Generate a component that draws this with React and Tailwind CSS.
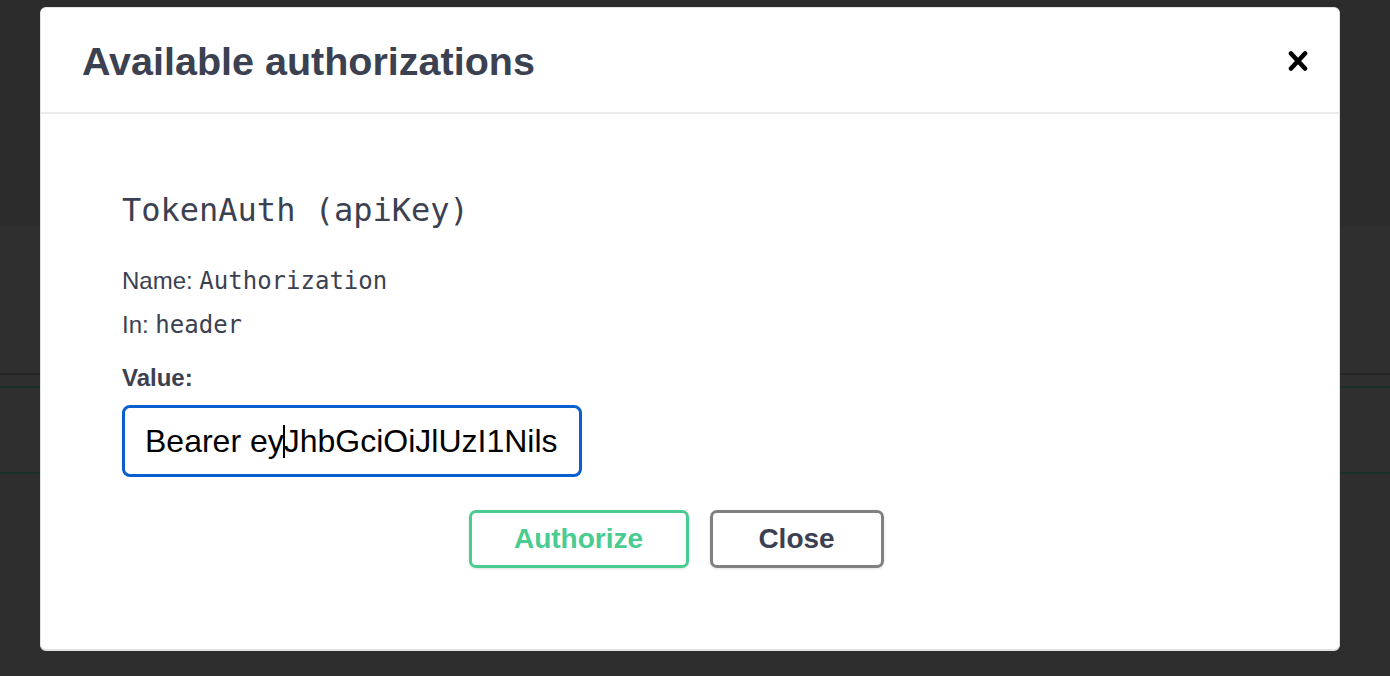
import React from "react";

const sans = { fontFamily: '"Liberation Sans", Arial, sans-serif' };

const CloseIcon = () => (
  <svg width="20" height="22" viewBox="0 0 20 22" aria-hidden="true">
    <path d="M3 3.5 L17 18.5 M17 3.5 L3 18.5" stroke="#000" strokeWidth="4.6" strokeLinecap="round" fill="none" />
  </svg>
);

const Backdrop = () => (
  <div className="w-full h-[676px] bg-[#2e2e2e] flex flex-col">
    <div className="h-[226px] bg-[#2c2c2c]" />
    <div className="h-[147px] bg-[#2f2f2f]" />
    <div className="h-[2px] bg-[#252525]" />
    <div className="h-[11px] bg-[#2f2f2f]" />
    <div className="h-[2px] bg-[#1b3228]" />
    <div className="h-[84px] bg-[#2f2f2f]" />
    <div className="h-[2px] bg-[#1b3228]" />
    <div className="flex-1 bg-[#2e2e2e]" />
  </div>
);

export default function App() {
  return (
    <div className="relative w-[1390px] h-[676px] overflow-hidden" style={sans}>
      <Backdrop />

      {/* Modal */}
      <div className="absolute left-[40px] top-[7px] w-[1300px] h-[644px] bg-white rounded-[6px] border border-[#e2e2e2] border-b-2 flex flex-col">
        <div className="h-[106px] border-b-2 border-[#ebebeb] flex items-center justify-between pl-[41px] pr-[31px] pt-[2px]">
          <h3 className="text-[39.5px] leading-[48px] font-bold text-[#3b4151]">Available authorizations</h3>
          <button className="w-[20px] h-[22px] flex items-center justify-center">
            <CloseIcon />
          </button>
        </div>

        <div className="pl-[81px] pt-[76px] flex flex-col text-[#3b4151]">
          <h4 className="text-[32px] leading-[40px] font-['DejaVu_Sans_Mono',monospace]">TokenAuth (apiKey)</h4>

          <div className="mt-[29px] text-[24px] leading-[43px]">
            <p>
              Name: <code className="font-['DejaVu_Sans_Mono',monospace] text-[24px]">Authorization</code>
            </p>
            <p>
              In: <code className="font-['DejaVu_Sans_Mono',monospace] text-[24px]">header</code>
            </p>
          </div>

          <label className="mt-[16px] text-[24px] leading-[30px] font-bold">Value:</label>

          <div className="mt-[12px] w-[460px] h-[72px] border-[3px] border-[#0a5fcf] rounded-[8px] flex items-center pl-[20px] text-black text-[32px] leading-[40px] whitespace-nowrap overflow-hidden">
            <span>Bearer ey</span>
            <span className="inline-block w-[2px] h-[33px] bg-black -mx-px" />
            <span>JhbGciOiJlUzI1Nils</span>
          </div>
        </div>

        <div className="mt-[33px] flex justify-center gap-[21px] pr-[28px]">
          <button className="w-[220px] h-[58px] border-[3px] border-[#49cc90] rounded-[7px] text-[#49cc90] text-[28px] leading-[34px] font-bold shadow-[0_1px_3px_rgba(0,0,0,0.12)]">
            Authorize
          </button>
          <button className="w-[174px] h-[58px] border-[3px] border-[#808080] rounded-[7px] text-[#3b4151] text-[28px] leading-[34px] font-bold shadow-[0_1px_3px_rgba(0,0,0,0.12)]">
            Close
          </button>
        </div>
      </div>
    </div>
  );
}
